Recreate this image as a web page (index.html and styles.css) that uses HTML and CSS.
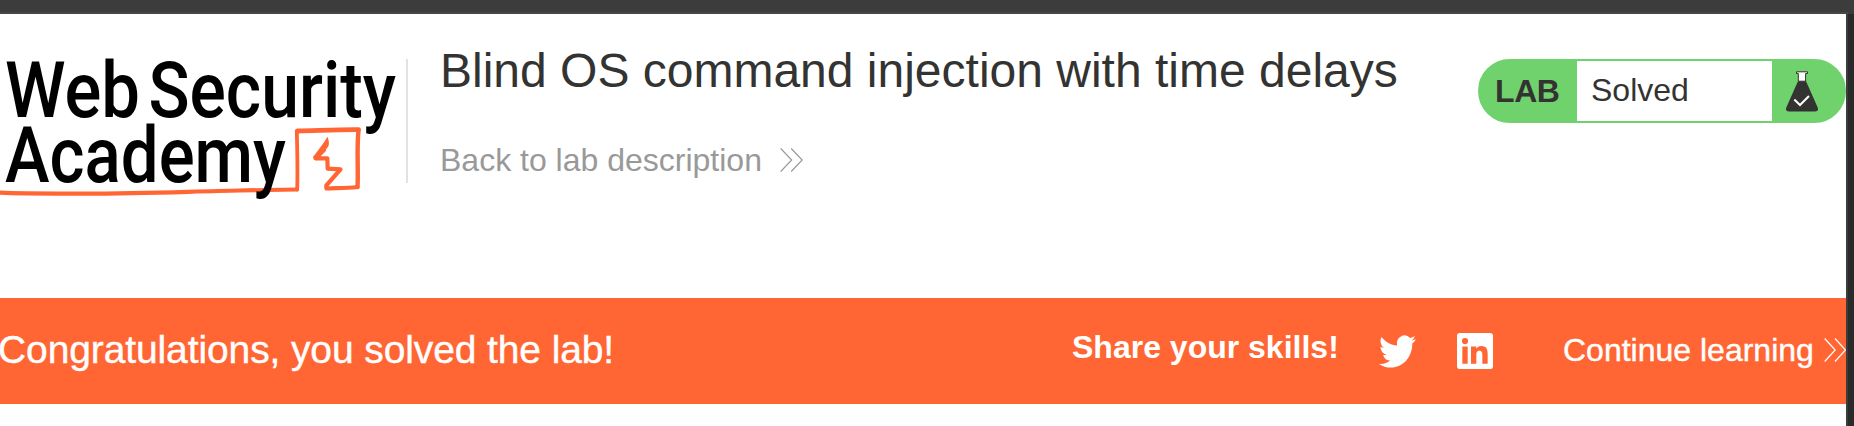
FILE: index.html
```html
<!DOCTYPE html>
<html lang="en">
<head>
<meta charset="utf-8">
<title>Blind OS command injection with time delays</title>
<link rel="stylesheet" href="styles.css">
</head>
<body>
<div class="window">
  <main class="page">
    <header class="header">
      <svg class="logo" width="406" height="150" viewBox="0 52 406 150" role="img" aria-label="Web Security Academy">
        <g fill="none" stroke="#f63" stroke-linecap="round" stroke-linejoin="round">
          <path d="M0 192.700C20 193.700 45 193.600 80 193.600C150 193.700 190 191.300 240 190.500L297 189.500" stroke-width="4.200"/>
          <path d="M297.200 189.500C297.800 170 297.300 150 296.800 131.500" stroke-width="3.800"/>
          <path d="M297.300 131C320 130.500 340 129.500 358.500 129.700" stroke-width="4.800"/>
          <path d="M358.500 130C356.500 150 358.500 170 357.500 187" stroke-width="4.400"/>
          <path d="M357.500 187C345 188.300 335 188 326.500 188.500L326.300 185.500L340.500 169.300L327.700 168.600L327.300 158.300L315.500 158.300L324 150" stroke-width="4.200"/>
        </g>
        <path fill="#f63" d="M327.300 136.700C325.500 141 319 149 312.800 157.300L317 160.500C321 154 327.500 149 328.800 145C329.200 142 328.500 138.500 327.300 136.700Z"/>
        <g class="logo-text">
          <text x="5" y="116.500" textLength="135" lengthAdjust="spacingAndGlyphs">Web</text>
          <text x="148.500" y="116.500" textLength="247.500" lengthAdjust="spacingAndGlyphs">Security</text>
          <text x="5" y="181.500" textLength="281" lengthAdjust="spacingAndGlyphs">Academy</text>
        </g>
      </svg>
      <div class="divider"></div>
      <div class="title">
        <h1>Blind OS command injection with time delays</h1>
        <a class="back"><span>Back to lab description</span>
          <svg width="23" height="24" viewBox="0 0 23 24"><path d="M.7.500L11.700 12L.7 23.500M11.200.500L22.200 12L11.200 23.500"/></svg>
        </a>
      </div>
      <div class="status">
        <strong>LAB</strong>
        <span class="state">Solved</span>
        <svg class="flask" width="32" height="41" viewBox="0 0 32 41">
          <path fill="#333332" d="M12.500 9H19.500L31.700 36.500Q33 40.500 29 40.500H3Q-1 40.500.3 36.500Z"/>
          <path fill="#fff" stroke="#333332" d="M10.500.8H21.500V2.500H19.600V10.200H12.300V2.500H10.500Z"/>
          <path fill="none" stroke="#fff" stroke-width="2" d="M8.300 28.500L14 34L23 25"/>
        </svg>
      </div>
    </header>
    <section class="banner">
      <span class="congrats">Congratulations, you solved the lab!</span>
      <strong class="share">Share your skills!</strong>
      <svg class="twitter" width="37" height="33" viewBox="0 2 24 20" preserveAspectRatio="none"><path fill="#fff" d="M23.950 4.570a10 10 0 0 1-2.820.780 4.960 4.960 0 0 0 2.160-2.720c-.950.550-2 .950-3.130 1.180a4.920 4.920 0 0 0-8.380 4.480C7.690 8.100 4.070 6.130 1.640 3.160a4.820 4.820 0 0 0-.660 2.480c0 1.700.860 3.210 2.180 4.100a4.900 4.900 0 0 1-2.230-.620v.060a4.920 4.920 0 0 0 3.950 4.830 5 5 0 0 1-2.210.080 4.940 4.940 0 0 0 4.600 3.420A9.870 9.870 0 0 1 0 19.540a13.990 13.990 0 0 0 7.560 2.210c9.050 0 14-7.500 14-13.980 0-.210 0-.420-.020-.630a9.940 9.940 0 0 0 2.460-2.550z"/></svg>
      <svg class="linkedin" width="36" height="36" viewBox="0 0 24 24"><path fill="#fff" d="M20.450 20.450h-3.560v-5.570c0-1.330-.030-3.040-1.850-3.040-1.850 0-2.140 1.450-2.140 2.940v5.670H9.350V9h3.410v1.560h.050c.480-.900 1.640-1.850 3.370-1.850 3.600 0 4.270 2.370 4.270 5.460v6.280zM5.340 7.430a2.060 2.060 0 1 1 0-4.130 2.060 2.060 0 0 1 0 4.130zM7.120 20.450H3.560V9h3.560v11.450zM22.230 0H1.770C.790 0 0 .770 0 1.730v20.540C0 23.230.790 24 1.770 24h20.450c.980 0 1.780-.770 1.780-1.730V1.730C24 .770 23.200 0 22.220 0h.010z"/></svg>
      <a class="continue"><span>Continue learning</span>
        <svg width="22" height="24" viewBox="0 0 22 24"><path d="M.7.500L11.200 12L.7 23.500M11 .500L21.500 12L11 23.500"/></svg>
      </a>
    </section>
  </main>
</div>
</body>
</html>
```
FILE: styles.css
```css
* { box-sizing: border-box; }
body {
  margin: 0;
  font-family: "Liberation Sans", Arial, sans-serif;
  color: #333332;
}
.window {
  width: 1854px;
  height: 426px;
  padding: 14px 8px 0 0;
  overflow: hidden;
  background: linear-gradient(#464646, #464646) 0 12px / 1848px 2px no-repeat,
    linear-gradient(#3c3c3c, #3c3c3c) 0 0 / 1854px 14px no-repeat,
    linear-gradient(#3c3c3c, #3c3c3c) 1846px 14px / 2px 412px no-repeat,
    #2a2a2a;
}
.page { height: 412px; background: #fff; }
.header { display: flex; align-items: flex-start; height: 284px; }
.logo { flex: none; margin-top: 38px; }
.logo-text {
  font-family: Roboto, sans-serif;
  font-size: 77px;
  font-weight: 500;
  fill: #000;
}
.divider { width: 2px; height: 124px; margin-top: 45px; background: #e2e2e2; }
.title { padding: 29px 0 0 32px; white-space: nowrap; }
h1 { margin: 0; font-size: 48px; font-weight: 400; line-height: 56px; }
.back {
  display: flex;
  align-items: center;
  gap: 18px;
  margin-top: 43px;
  font-size: 32px;
  line-height: 36px;
  color: #999;
}
.back svg, .continue svg { fill: none; stroke: currentColor; stroke-width: 1.2; }
.status {
  display: flex;
  align-items: center;
  width: 368px;
  height: 64px;
  margin: 45px 0 0 auto;
  border: 2px solid #70d26d;
  border-radius: 32px;
  background: #70d26d;
  font-size: 32px;
  overflow: hidden;
}
.status strong { width: 97px; padding: 1px 0 0 15px; letter-spacing: -.4px; }
.state { width: 195px; height: 60px; padding-left: 14px; line-height: 58px; background: #fff; }
.flask { margin-left: 14px; }
.banner {
  display: flex;
  align-items: flex-start;
  height: 106px;
  background: #f63;
  color: #fff;
  white-space: nowrap;
}
.congrats {
  width: 1074px;
  padding-top: 30px;
  margin-left: -2px;
  font-size: 39px;
  line-height: 44px;
  letter-spacing: -.11px;
}
.congrats, .continue span { -webkit-text-stroke: .4px #fff; }
.share { width: 307px; padding-top: 31px; font-size: 32px; line-height: 36px; }
.twitter { margin-top: 37px; }
.linkedin { margin: 35px 0 0 41px; }
.continue {
  display: flex;
  align-items: center;
  justify-content: space-between;
  width: 283px;
  margin: 34px 0 0 auto;
  font-size: 32px;
  line-height: 36px;
}
```
